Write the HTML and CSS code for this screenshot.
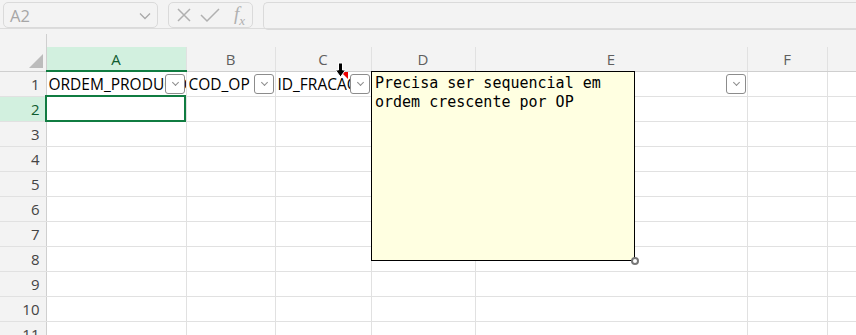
FILE: index.html
```html
<!DOCTYPE html>
<html lang="pt-BR">
<head>
    <meta charset="UTF-8">
    <title>Planilha</title>
    <link rel="stylesheet" href="styles.css">
</head>
<body>
    <!-- formula bar -->
    <div class="toolbar">
        <div class="name-box">
            <span>A2</span>
            <svg class="chev" width="12" height="8" viewBox="0 0 12 8"><polyline points="1,1.5 6,6.5 11,1.5" fill="none" stroke="#a8a8a8" stroke-width="1.3"/></svg>
        </div>
        <div class="fx-buttons">
            <svg width="16" height="16" viewBox="0 0 16 16"><path d="M2 2 L14 14 M14 2 L2 14" stroke="#b0b0b0" stroke-width="1.5" fill="none"/></svg>
            <svg width="20" height="16" viewBox="0 0 20 16"><polyline points="1,8 7,14 19,2" stroke="#b0b0b0" stroke-width="1.5" fill="none"/></svg>
            <span class="fx">f<sub>x</sub></span>
        </div>
        <div class="formula-input"></div>
    </div>
    <div class="band"></div>

    <div class="sheet">
        <table class="grid">
            <colgroup>
                <col class="c-row"><col class="c-a"><col class="c-b"><col class="c-c"><col class="c-d"><col class="c-e"><col class="c-f"><col class="c-g">
            </colgroup>
            <tr class="head">
                <th class="corner"><span class="tri"></span></th>
                <th class="sel">A</th><th>B</th><th>C</th><th>D</th><th>E</th><th>F</th><th></th>
            </tr>
            <tr>
                <th class="num">1</th>
                <td class="txt">ORDEM_PRODUCAO<span class="filter"></span></td>
                <td class="txt">COD_OP<span class="filter"></span></td>
                <td class="txt">ID_FRACAO<span class="filter"></span><span class="note-mark"></span></td>
                <td></td>
                <td><span class="filter"></span></td>
                <td></td><td></td>
            </tr>
            <tr><th class="num sel">2</th><td></td><td></td><td></td><td></td><td></td><td></td><td></td></tr>
            <tr><th class="num">3</th><td></td><td></td><td></td><td></td><td></td><td></td><td></td></tr>
            <tr><th class="num">4</th><td></td><td></td><td></td><td></td><td></td><td></td><td></td></tr>
            <tr><th class="num">5</th><td></td><td></td><td></td><td></td><td></td><td></td><td></td></tr>
            <tr><th class="num">6</th><td></td><td></td><td></td><td></td><td></td><td></td><td></td></tr>
            <tr><th class="num">7</th><td></td><td></td><td></td><td></td><td></td><td></td><td></td></tr>
            <tr><th class="num">8</th><td></td><td></td><td></td><td></td><td></td><td></td><td></td></tr>
            <tr><th class="num">9</th><td></td><td></td><td></td><td></td><td></td><td></td><td></td></tr>
            <tr><th class="num">10</th><td></td><td></td><td></td><td></td><td></td><td></td><td></td></tr>
            <tr><th class="num">11</th><td></td><td></td><td></td><td></td><td></td><td></td><td></td></tr>
        </table>

        <!-- overlays -->
        <div class="active-cell"></div>
        <svg class="cursor" width="11" height="16" viewBox="0 0 11 16">
            <path d="M3.5 1 H7.5 V8 H10.5 L5.5 15 L0.5 8 H3.5 Z" fill="#000" stroke="#fff" stroke-width="1"/>
        </svg>
        <div class="comment">Precisa ser sequencial em
ordem crescente por OP<span class="handle"></span></div>
    </div>
</body>
</html>
```

FILE: styles.css
```css
body {
    margin: 0;
    background: #f3f3f3;
    font-family: "Open Sans", "Noto Sans", Arial, sans-serif;
    overflow: hidden;
}
.toolbar {
    display: flex;
    align-items: flex-start;
    height: 29px;
    padding: 2px 0 0 3px;
    box-sizing: border-box;
    border-bottom: 1px solid #dcdcdc;
}
.name-box {
    width: 155px;
    height: 26px;
    box-sizing: border-box;
    border: 1px solid #dadada;
    border-radius: 5px;
    display: flex;
    align-items: center;
    justify-content: space-between;
    padding: 0 6px 0 6px;
    color: #a6a6a6;
    font-size: 16.5px;
}
.name-box .chev {
    margin-top: 2px;
}
.fx-buttons {
    margin-left: 10px;
    width: 85px;
    height: 26px;
    box-sizing: border-box;
    border: 1px solid #dadada;
    border-radius: 5px;
    display: flex;
    align-items: center;
    gap: 8px;
    padding-left: 7px;
}
.fx {
    font-family: "Liberation Serif", serif;
    font-style: italic;
    color: #b0b0b0;
    font-size: 19px;
    margin-left: 6px;
    line-height: 1;
}
.fx sub {
    font-size: 13px;
}
.formula-input {
    margin-left: 10px;
    flex: 1;
    height: 26px;
    border: 1px solid #dadada;
    border-right: none;
    border-radius: 5px 0 0 5px;
}
.band {
    height: 18px;
}

/* sheet */
.sheet {
    position: relative;
}
.grid {
    border-collapse: collapse;
    table-layout: fixed;
    width: 900px;
    background: #fff;
}
.c-row { width: 46px; }
.c-a { width: 140px; }
.c-b { width: 89px; }
.c-c { width: 96px; }
.c-d { width: 104px; }
.c-e { width: 272px; }
.c-f { width: 80px; }
.grid th, .grid td {
    padding: 0;
    height: 24px;
    border: 1px solid #e1e1e1;
    box-sizing: border-box;
}
.grid td {
    position: relative;
    white-space: nowrap;
    overflow: hidden;
}
.head th {
    background: #f3f3f3;
    color: #5f5f5f;
    font-weight: normal;
    font-size: 15px;
    border-top: none;
    border-bottom: 1px solid #cfcfcf;
    height: 24px;
}
.head th.sel {
    background: #d2f0df;
    color: #0f5c30;
    border-bottom: 2px solid #107c41;
}
.corner {
    position: relative;
    border-left: none !important;
    border-right: 1px solid #cfcfcf !important;
}
.corner::before {
    content: '';
    position: absolute;
    right: -1px;
    top: -13px;
    height: 13px;
    border-right: 1px solid #cfcfcf;
}
.tri {
    position: absolute;
    right: 3px;
    bottom: 3px;
    border-style: solid;
    border-width: 0 0 14px 14px;
    border-color: transparent transparent #bcbcbc transparent;
}
.num {
    background: #f3f3f3;
    color: #444;
    font-weight: normal;
    font-size: 15px;
    text-align: right;
    padding-right: 6px !important;
    border-left: none !important;
    border-right: 1px solid #cfcfcf !important;
    height: 25px !important;
}
.num.sel {
    background: #d2f0df;
    color: #0f5c30;
}
.grid tr:not(.head) td {
    height: 25px;
}
.txt {
    font-size: 15.5px;
    color: #000;
    padding-left: 2px !important;
}
.filter {
    position: absolute;
    right: 1px;
    top: 2px;
    width: 20px;
    height: 20px;
    box-sizing: border-box;
    border: 1px solid #8c8c8c;
    border-radius: 3px;
    background: #fff;
}
.filter::after {
    content: '';
    position: absolute;
    left: 7px;
    top: 5px;
    width: 4px;
    height: 4px;
    border-right: 1px solid #8c8c8c;
    border-bottom: 1px solid #8c8c8c;
    transform: rotate(45deg);
}
.note-mark {
    position: absolute;
    right: 23px;
    top: 0;
    border-style: solid;
    border-width: 0 7px 7px 0;
    border-color: transparent #e00 transparent transparent;
}
.active-cell {
    position: absolute;
    left: 45px;
    top: 48px;
    width: 141px;
    height: 27px;
    box-sizing: border-box;
    border: 2px solid #107c41;
}
.cursor {
    position: absolute;
    left: 335px;
    top: 15px;
}
.comment {
    position: absolute;
    left: 371px;
    top: 24px;
    width: 264px;
    height: 190px;
    box-sizing: border-box;
    background: #ffffe1;
    border: 1px solid #000;
    padding: 2px 3px;
    font-family: "DejaVu Sans Mono", monospace;
    font-size: 15px;
    line-height: 19px;
    color: #000;
    white-space: pre;
}
.handle {
    position: absolute;
    right: -5px;
    bottom: -5px;
    width: 8px;
    height: 8px;
    box-sizing: border-box;
    border: 2px solid #777;
    border-radius: 50%;
    background: #fff;
}
```
